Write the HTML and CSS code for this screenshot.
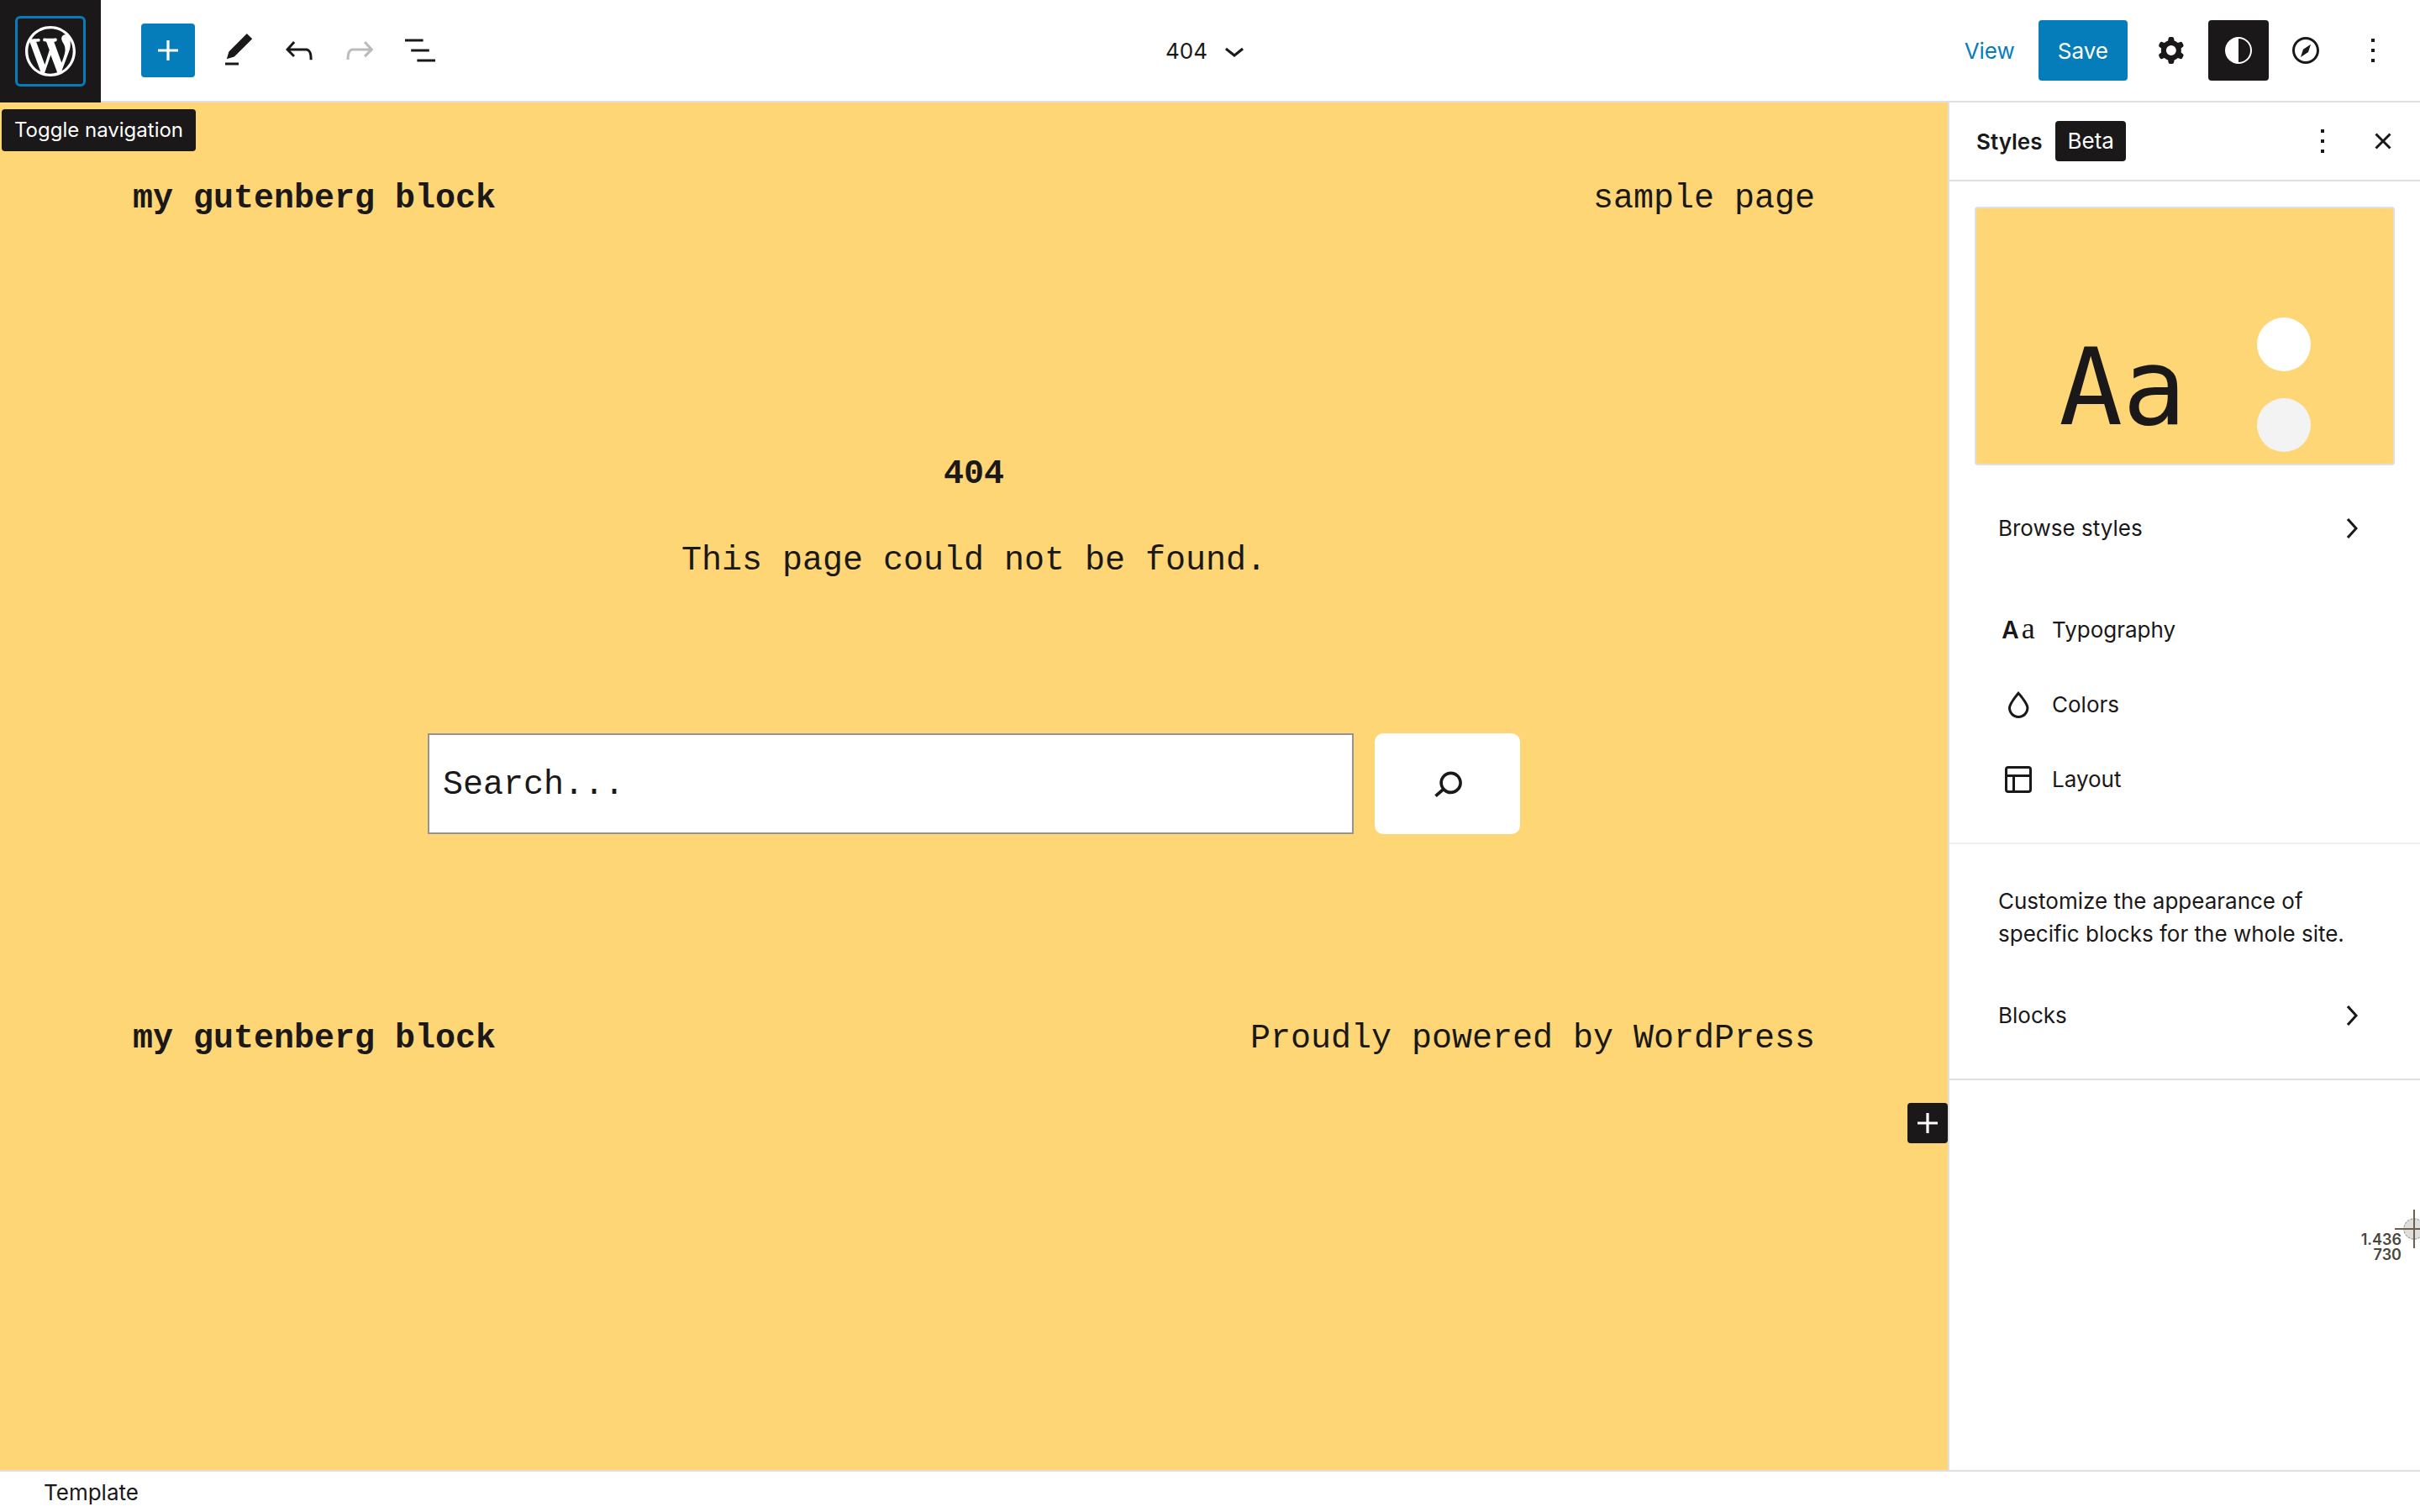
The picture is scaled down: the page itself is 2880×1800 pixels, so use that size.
FILE: index.html
```html
<!DOCTYPE html>
<html lang="en">
<head>
<meta charset="utf-8">
<meta name="viewport" content="width=device-width, initial-scale=1">
<title>404 template – Site editor</title>
<link rel="stylesheet" href="styles.css">
</head>
<body>
<div class="editor">
  <header class="toolbar">
    <div class="toolbar-start">
      <div class="site-hub">
        <button class="site-button" type="button" aria-describedby="hub-tip" aria-label="Toggle navigation">
          <svg class="site-logo" viewBox="-2 -2 24 24" aria-hidden="true"><path d="M20 10c0-5.51-4.49-10-10-10C4.48 0 0 4.49 0 10c0 5.52 4.48 10 10 10 5.51 0 10-4.48 10-10zM7.78 15.37L4.37 6.22c.55-.02 1.17-.08 1.17-.08.5-.06.44-1.13-.06-1.11 0 0-1.45.11-2.37.11-.18 0-.37 0-.58-.01C4.12 2.69 6.87 1.11 10 1.11c2.33 0 4.45.87 6.05 2.34-.68-.11-1.65.39-1.65 1.58 0 .74.45 1.36.9 2.1.35.61.55 1.36.55 2.46 0 1.49-1.4 5-1.4 5l-3.03-8.37c.54-.02.82-.17.82-.17.5-.05.44-1.25-.06-1.22 0 0-1.44.12-2.38.12-.87 0-2.33-.12-2.33-.12-.5-.03-.56 1.2-.06 1.22l.92.08 1.26 3.41zM17.41 10c.24-.64.74-1.87.43-4.25.7 1.29 1.05 2.71 1.05 4.25 0 3.29-1.73 6.24-4.4 7.78.97-2.59 1.94-5.2 2.92-7.78zM6.1 18.09C3.12 16.65 1.11 13.53 1.11 10c0-1.3.23-2.48.72-3.59C3.25 10.3 4.67 14.2 6.1 18.09zm4.03-6.63l2.58 6.98c-.86.29-1.76.45-2.71.45-.79 0-1.57-.11-2.29-.33.81-2.38 1.62-4.74 2.42-7.1z"/></svg>
        </button>
        <span class="tooltip" id="hub-tip" role="tooltip">Toggle navigation</span>
      </div>
      <div class="tools">
        <button class="tool tool-insert" type="button" aria-label="Toggle block inserter"><svg class="icon" viewBox="0 0 24 24" aria-hidden="true"><path d="M18 11.2h-5.2V6h-1.6v5.2H6v1.6h5.2V18h1.6v-5.2H18z"/></svg></button>
        <button class="tool" type="button" aria-label="Tools"><svg class="icon" viewBox="0 0 24 24" aria-hidden="true"><path d="M20.1 5.1L16.9 2 6.2 12.7l-1.3 4.4 4.5-1.3L20.1 5.1zM4 20.8h8v-1.5H4v1.5z"/></svg></button>
        <button class="tool" type="button" aria-label="Undo"><svg class="icon" viewBox="0 0 24 24" aria-hidden="true"><path d="M18.3 11.7c-.6-.6-1.4-.9-2.3-.9H6.7l2.9-3.3-1.1-1-4.5 5L8.5 16l1-1-2.7-2.7H16c.5 0 .9.2 1.3.5 1 1 1 3.4 1 4.5v.3h1.5v-.2c0-1.5 0-4.3-1.5-5.7z"/></svg></button>
        <button class="tool" type="button" aria-label="Redo" disabled><svg class="icon" viewBox="0 0 24 24" aria-hidden="true"><path d="M15.6 6.5l-1.1 1 2.9 3.3H8c-.9 0-1.7.3-2.3.9-1.4 1.5-1.4 4.2-1.4 5.6v.2h1.5v-.3c0-1.1 0-3.5 1-4.5.3-.3.7-.5 1.3-.5h9.2L14.5 15l1.1 1.1 4.6-4.6-4.6-5z"/></svg></button>
        <button class="tool" type="button" aria-label="List view"><svg class="icon" viewBox="0 0 24 24" aria-hidden="true"><path d="M13.8 5.2H3v1.5h10.8V5.2zm-3.6 12v1.5H21v-1.5H10.2zm7.2-6H6.6v1.5h10.8v-1.5z"/></svg></button>
      </div>
    </div>
    <button class="document-title" type="button">
      <span>404</span>
      <svg class="icon" viewBox="0 0 24 24" aria-hidden="true"><path d="M17.5 11.6L12 16l-5.5-4.4.9-1.2L12 14l4.5-3.6 1 1.2z"/></svg>
    </button>
    <div class="toolbar-end">
      <a class="view-link" href="#view">View</a>
      <button class="save" type="button">Save</button>
      <div class="panel-toggles">
        <button class="toggle" type="button" aria-label="Settings"><svg class="icon" viewBox="0 0 24 24" aria-hidden="true"><path fill-rule="evenodd" d="M10.289 4.836A1 1 0 0111.275 4h1.306a1 1 0 01.987.836l.244 1.466c.787.26 1.503.679 2.108 1.218l1.393-.522a1 1 0 011.216.437l.653 1.13a1 1 0 01-.23 1.273l-1.148.944a6.025 6.025 0 010 2.435l1.149.946a1 1 0 01.23 1.272l-.653 1.13a1 1 0 01-1.216.437l-1.394-.522c-.605.54-1.32.958-2.108 1.218l-.244 1.466a1 1 0 01-.987.836h-1.306a1 1 0 01-.986-.836l-.244-1.466a5.995 5.995 0 01-2.108-1.218l-1.394.522a1 1 0 01-1.217-.436l-.653-1.131a1 1 0 01.23-1.272l1.149-.946a6.026 6.026 0 010-2.435l-1.148-.944a1 1 0 01-.23-1.272l.653-1.131a1 1 0 011.217-.437l1.393.522a5.994 5.994 0 012.108-1.218l.244-1.466zM14.929 12a3 3 0 11-6 0 3 3 0 016 0z"/></svg></button>
        <button class="toggle toggle-on" type="button" aria-label="Styles" aria-pressed="true"><svg class="icon" viewBox="0 0 24 24" aria-hidden="true"><path fill-rule="evenodd" d="M12 4a8 8 0 100 16 8 8 0 000-16zm0 1a7 7 0 010 14z"/></svg></button>
        <button class="toggle" type="button" aria-label="Navigation"><svg class="icon" viewBox="0 0 24 24" aria-hidden="true"><path d="M12 4c-4.4 0-8 3.6-8 8s3.6 8 8 8 8-3.6 8-8-3.6-8-8-8zm0 14.5c-3.6 0-6.5-2.9-6.5-6.5S8.4 5.5 12 5.5s6.5 2.9 6.5 6.5-2.9 6.5-6.5 6.5zM9 16l4.5-3L15 8.4l-4.5 3L9 16z"/></svg></button>
        <button class="toggle" type="button" aria-label="Options"><svg class="icon" viewBox="0 0 24 24" aria-hidden="true"><path d="M13 19h-2v-2h2v2zm0-6h-2v-2h2v2zm0-6h-2V5h2v2z"/></svg></button>
      </div>
    </div>
  </header>

  <div class="workspace">
    <main class="canvas">
      <div class="site-row">
        <strong>my gutenberg block</strong>
        <a class="site-link" href="#sample-page">sample page</a>
      </div>
      <section class="not-found">
        <h1 class="not-found-title">404</h1>
        <p class="not-found-text">This page could not be found.</p>
        <form class="search">
          <input class="search-field" type="search" placeholder="Search..." aria-label="Search">
          <button class="search-button" type="button" aria-label="Submit search"><svg class="search-icon" viewBox="0 0 24 24" aria-hidden="true"><path d="M13.5 6C10.5 6 8 8.5 8 11.5c0 1.1.3 2.1.9 3l-3.4 3 1 1.1 3.4-2.9c1 .9 2.2 1.4 3.6 1.4 3 0 5.5-2.5 5.5-5.5C19 8.5 16.5 6 13.5 6zm0 9.5c-2.2 0-4-1.8-4-4s1.8-4 4-4 4 1.8 4 4-1.8 4-4 4z"/></svg></button>
        </form>
      </section>
      <div class="site-row">
        <strong>my gutenberg block</strong>
        <span>Proudly powered by WordPress</span>
      </div>
      <button class="appender" type="button" aria-label="Add block"><svg class="icon" viewBox="0 0 24 24" aria-hidden="true"><path d="M18 11.2h-5.2V6h-1.6v5.2H6v1.6h5.2V18h1.6v-5.2H18z"/></svg></button>
    </main>

    <aside class="sidebar">
      <div class="sidebar-header">
        <h2 class="sidebar-title">Styles</h2>
        <span class="badge">Beta</span>
        <div class="sidebar-actions">
          <button class="sidebar-action" type="button" aria-label="More styles actions"><svg class="icon" viewBox="0 0 24 24" aria-hidden="true"><path d="M13 19h-2v-2h2v2zm0-6h-2v-2h2v2zm0-6h-2V5h2v2z"/></svg></button>
          <button class="sidebar-action" type="button" aria-label="Close styles"><svg class="icon" viewBox="0 0 24 24" aria-hidden="true"><path d="M12 13.06l3.712 3.713 1.061-1.06L13.061 12l3.712-3.712-1.06-1.06L12 10.938 8.288 7.227l-1.061 1.06L10.939 12l-3.712 3.712 1.06 1.061L12 13.061z"/></svg></button>
        </div>
      </div>
      <div class="panel">
        <div class="preview">
          <span class="preview-type">Aa</span>
          <div class="preview-colors">
            <span class="swatch"></span>
            <span class="swatch swatch-muted"></span>
          </div>
        </div>
        <button class="row row-more" type="button">
          <span>Browse styles</span>
          <svg class="icon" viewBox="0 0 24 24" aria-hidden="true"><path d="M10.6 6L9.4 7l4.6 5-4.6 5 1.2 1 5.4-6z"/></svg>
        </button>
        <div class="row-group">
          <button class="row" type="button">
            <span class="type-icon" aria-hidden="true">A<span class="type-icon-serif">a</span></span>
            <span>Typography</span>
          </button>
          <button class="row" type="button">
            <svg class="icon" viewBox="0 0 24 24" aria-hidden="true"><path d="M17.2 10.9c-.5-1-1.2-2.1-2.1-3.2-.6-.9-1.3-1.7-2.1-2.6L12 4l-1 1.1c-.6.9-1.3 1.7-2 2.6-.8 1.2-1.5 2.3-2 3.2-.6 1.2-1 2.2-1 3 0 3.4 2.7 6.1 6.1 6.1s6.1-2.7 6.1-6.1c0-.8-.3-1.8-1-3zm-5.1 7.6c-2.5 0-4.6-2.1-4.6-4.6 0-.3.1-1 .8-2.3.5-.9 1.1-1.9 2-3.1.7-.9 1.3-1.7 1.8-2.3.7.8 1.3 1.6 1.8 2.3.8 1.1 1.5 2.2 2 3.1.7 1.3.8 2 .8 2.3 0 2.5-2.1 4.6-4.6 4.6z"/></svg>
            <span>Colors</span>
          </button>
          <button class="row" type="button">
            <svg class="icon" viewBox="0 0 24 24" aria-hidden="true"><path fill-rule="evenodd" d="M18 5.5H6a.5.5 0 00-.5.5v3h13V6a.5.5 0 00-.5-.5zm.5 5H10v8h8a.5.5 0 00.5-.5v-7.5zm-10 0h-3V18a.5.5 0 00.5.5h2.5v-8zM6 4h12a2 2 0 012 2v12a2 2 0 01-2 2H6a2 2 0 01-2-2V6a2 2 0 012-2z"/></svg>
            <span>Layout</span>
          </button>
        </div>
      </div>
      <div class="panel panel-blocks">
        <p class="hint">Customize the appearance of specific blocks for the whole site.</p>
        <button class="row row-more" type="button">
          <span>Blocks</span>
          <svg class="icon" viewBox="0 0 24 24" aria-hidden="true"><path d="M10.6 6L9.4 7l4.6 5-4.6 5 1.2 1 5.4-6z"/></svg>
        </button>
      </div>
    </aside>
  </div>

  <footer class="breadcrumb">Template</footer>

  <div class="crosshair" aria-hidden="true">
    <div class="crosshair-position"><span>1.436</span><span>730</span></div>
    <svg class="crosshair-mark" viewBox="0 0 30 46"><circle cx="23" cy="23" r="13" fill="#dedede"/><circle cx="23" cy="23" r="12" fill="none" stroke="#8a867c" stroke-dasharray="2 2"/><path d="M0 23h30M23 0v46" stroke="#6b614b" stroke-width="2"/></svg>
  </div>
</div>
</body>
</html>
```
FILE: styles.css
```css
:root {
  --ink: #1a1818;
  --blue: #067dbb;
  --line: #e0e0e0;
  --sun: #ffd675;
  --mono: "Liberation Mono", "Courier New", monospace;
  --ui: Inter, "Liberation Sans", sans-serif;
}

*,
*::before {
  box-sizing: border-box;
}

body {
  margin: 0;
  color: var(--ink);
  background: #fff;
  font: 26px/39px var(--ui);
}

button {
  margin: 0;
  padding: 0;
  border: 0;
  border-radius: 4px;
  background: none;
  color: inherit;
  font: inherit;
}

h1,
h2,
p {
  margin: 0;
}

.icon {
  flex: none;
  display: block;
  width: 48px;
  height: 48px;
  fill: currentColor;
}

.editor {
  position: relative;
  display: flex;
  flex-direction: column;
  min-height: 100vh;
  overflow: hidden;
}

/* Top toolbar */

.toolbar {
  display: grid;
  grid-template-columns: 1fr auto 1fr;
  align-items: center;
  height: 122px;
  border-bottom: 2px solid var(--line);
}

.toolbar-start,
.tools,
.toolbar-end,
.panel-toggles {
  display: flex;
  align-items: center;
}

.site-hub {
  position: relative;
  margin-bottom: -2px;
}

.site-button {
  display: grid;
  place-items: center;
  width: 120px;
  height: 122px;
  border-radius: 0;
  background: var(--ink);
  color: #fff;
}

.site-logo {
  grid-area: 1 / 1;
  width: 72px;
  height: 72px;
  fill: currentColor;
}

.site-button::before {
  content: "";
  grid-area: 1 / 1;
  width: 84px;
  height: 84px;
  border: 3px solid var(--blue);
  border-radius: 6px;
}

.tooltip {
  position: absolute;
  z-index: 1;
  top: 130px;
  left: 2px;
  padding: 7px 15px;
  border-radius: 4px;
  background: var(--ink);
  color: #fff;
  font-size: 24px;
  line-height: 36px;
  white-space: nowrap;
}

.tools {
  gap: 8px;
  padding-left: 48px;
}

.tool {
  display: grid;
  place-items: center;
  width: 64px;
  height: 64px;
}

.tool:disabled {
  color: #bbb;
}

.tool-insert {
  margin-right: 12px;
  background: var(--blue);
  color: #fff;
}

.document-title {
  display: flex;
  align-items: center;
  gap: 8px;
}

.toolbar-end {
  justify-content: flex-end;
  gap: 16px;
  padding-right: 20px;
}

.view-link {
  padding: 0 12px;
  color: var(--blue);
  text-decoration: none;
}

.save {
  height: 72px;
  padding: 0 23px;
  background: var(--blue);
  color: #fff;
}

.panel-toggles {
  gap: 8px;
}

.toggle {
  display: grid;
  place-items: center;
  width: 72px;
  height: 72px;
}

.toggle-on {
  background: var(--ink);
  color: #fff;
}

/* Canvas */

.workspace {
  flex: 1;
  display: grid;
  grid-template-columns: 1fr 562px;
}

.canvas {
  position: relative;
  padding-top: 83px;
  background: var(--sun);
  font: 40px/64px var(--mono);
}

.site-row {
  display: flex;
  justify-content: space-between;
  padding: 0 158px;
}

.site-link {
  color: inherit;
  text-decoration: none;
}

.not-found {
  padding: 264px 0 212px;
  text-align: center;
}

.not-found-title {
  font: inherit;
  font-weight: 700;
}

.not-found-text {
  margin-top: 39px;
}

.search {
  display: flex;
  gap: 25px;
  width: 1300px;
  max-width: 100%;
  margin: 173px auto 0;
}

.search-field {
  flex: 1;
  min-width: 0;
  height: 120px;
  padding: 3px 16px 0;
  border: 2px solid #949494;
  border-radius: 0;
  background: #fff;
  color: inherit;
  font: inherit;
  appearance: none;
}

.search-field::placeholder {
  color: var(--ink);
  opacity: 1;
}

.search-button {
  display: grid;
  place-items: center;
  width: 173px;
  border-radius: 10px;
  background: #fff;
}

.search-icon {
  width: 58px;
  height: 58px;
  fill: currentColor;
}

.appender {
  position: absolute;
  right: 0;
  bottom: 389px;
  background: var(--ink);
  color: #fff;
}

/* Styles sidebar */

.sidebar {
  border-left: 2px solid var(--line);
  background: #fff;
}

.sidebar-header {
  display: flex;
  align-items: center;
  gap: 16px;
  height: 94px;
  padding: 0 8px 0 32px;
  border-bottom: 2px solid var(--line);
}

.sidebar-title {
  font-size: 26px;
  font-weight: 600;
}

.badge {
  padding: 0 14px;
  border-radius: 4px;
  background: var(--ink);
  color: #fff;
  line-height: 48px;
}

.sidebar-actions {
  display: flex;
  margin-left: auto;
}

.sidebar-action {
  display: grid;
  place-items: center;
  width: 72px;
  height: 72px;
}

.panel {
  padding: 30px 30px 31px;
  border-bottom: 2px solid #f0f0f0;
}

.preview {
  display: flex;
  align-items: flex-end;
  justify-content: center;
  gap: 84px;
  height: 308px;
  padding-bottom: 14px;
  border: 2px solid var(--line);
  border-radius: 4px;
  background: var(--sun);
}

.preview-type {
  font: 126px/152px "DejaVu Sans Mono", monospace;
}

.preview-colors {
  display: grid;
  gap: 32px;
}

.swatch {
  width: 64px;
  height: 64px;
  border-radius: 50%;
  background: #fff;
}

.swatch-muted {
  background: #f3f3f3;
}

.row {
  display: flex;
  align-items: center;
  gap: 16px;
  width: 100%;
  height: 89px;
  padding: 0 28px;
  text-align: left;
}

.row-more {
  justify-content: space-between;
}

.preview + .row {
  margin-top: 30px;
}

.row-group {
  margin-top: 32px;
}

.type-icon {
  display: flex;
  align-items: baseline;
  justify-content: center;
  gap: 3px;
  width: 48px;
  font-size: 28px;
  font-weight: 600;
}

.type-icon-serif {
  font-family: "Liberation Serif", serif;
  font-size: 36px;
  font-weight: 400;
}

.panel-blocks {
  padding-top: 48px;
  border-color: var(--line);
}

.hint {
  padding: 0 28px;
}

.hint + .row {
  margin-top: 33px;
}

/* Bottom bar */

.breadcrumb {
  height: 50px;
  padding: 5px 52px;
  border-top: 2px solid var(--line);
}

/* Screen-capture pointer with its coordinates */

.crosshair {
  position: absolute;
  right: 0;
  bottom: 314px;
  display: flex;
  align-items: flex-start;
  height: 46px;
}

.crosshair-mark {
  width: 30px;
  height: 46px;
}

.crosshair-position {
  display: grid;
  margin: 27px -8px 0 0;
  color: #4a463e;
  font-size: 18px;
  font-weight: 600;
  line-height: 18px;
  text-align: right;
}
```
